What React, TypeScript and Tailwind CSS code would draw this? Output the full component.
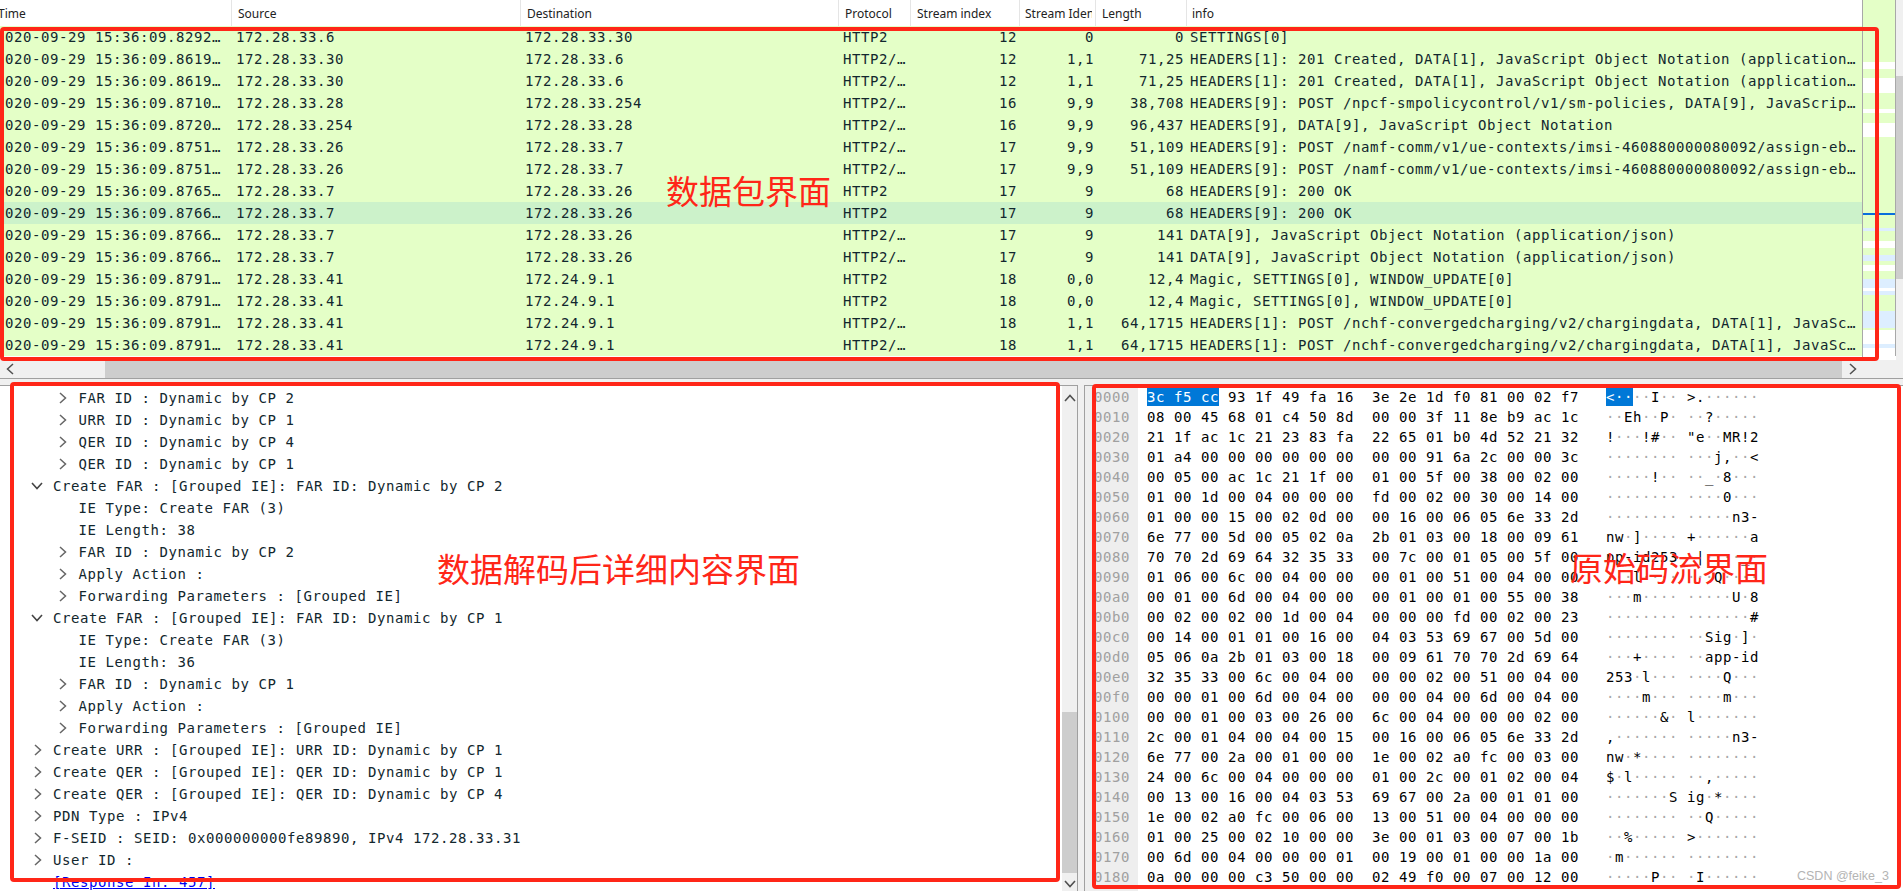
const packets: [string, string, string, string, string, string, string, string][] = [
  ["2020-09-29 15:36:09.8292…", "172.28.33.6", "172.28.33.30", "HTTP2", "12", "0", "0", "SETTINGS[0]"],
  ["2020-09-29 15:36:09.8619…", "172.28.33.30", "172.28.33.6", "HTTP2/…", "12", "1,1", "71,25", "HEADERS[1]: 201 Created, DATA[1], JavaScript Object Notation (application…"],
  ["2020-09-29 15:36:09.8619…", "172.28.33.30", "172.28.33.6", "HTTP2/…", "12", "1,1", "71,25", "HEADERS[1]: 201 Created, DATA[1], JavaScript Object Notation (application…"],
  ["2020-09-29 15:36:09.8710…", "172.28.33.28", "172.28.33.254", "HTTP2/…", "16", "9,9", "38,708", "HEADERS[9]: POST /npcf-smpolicycontrol/v1/sm-policies, DATA[9], JavaScrip…"],
  ["2020-09-29 15:36:09.8720…", "172.28.33.254", "172.28.33.28", "HTTP2/…", "16", "9,9", "96,437", "HEADERS[9], DATA[9], JavaScript Object Notation"],
  ["2020-09-29 15:36:09.8751…", "172.28.33.26", "172.28.33.7", "HTTP2/…", "17", "9,9", "51,109", "HEADERS[9]: POST /namf-comm/v1/ue-contexts/imsi-460880000080092/assign-eb…"],
  ["2020-09-29 15:36:09.8751…", "172.28.33.26", "172.28.33.7", "HTTP2/…", "17", "9,9", "51,109", "HEADERS[9]: POST /namf-comm/v1/ue-contexts/imsi-460880000080092/assign-eb…"],
  ["2020-09-29 15:36:09.8765…", "172.28.33.7", "172.28.33.26", "HTTP2", "17", "9", "68", "HEADERS[9]: 200 OK"],
  ["2020-09-29 15:36:09.8766…", "172.28.33.7", "172.28.33.26", "HTTP2", "17", "9", "68", "HEADERS[9]: 200 OK"],
  ["2020-09-29 15:36:09.8766…", "172.28.33.7", "172.28.33.26", "HTTP2/…", "17", "9", "141", "DATA[9], JavaScript Object Notation (application/json)"],
  ["2020-09-29 15:36:09.8766…", "172.28.33.7", "172.28.33.26", "HTTP2/…", "17", "9", "141", "DATA[9], JavaScript Object Notation (application/json)"],
  ["2020-09-29 15:36:09.8791…", "172.28.33.41", "172.24.9.1", "HTTP2", "18", "0,0", "12,4", "Magic, SETTINGS[0], WINDOW_UPDATE[0]"],
  ["2020-09-29 15:36:09.8791…", "172.28.33.41", "172.24.9.1", "HTTP2", "18", "0,0", "12,4", "Magic, SETTINGS[0], WINDOW_UPDATE[0]"],
  ["2020-09-29 15:36:09.8791…", "172.28.33.41", "172.24.9.1", "HTTP2/…", "18", "1,1", "64,1715", "HEADERS[1]: POST /nchf-convergedcharging/v2/chargingdata, DATA[1], JavaSc…"],
  ["2020-09-29 15:36:09.8791…", "172.28.33.41", "172.24.9.1", "HTTP2/…", "18", "1,1", "64,1715", "HEADERS[1]: POST /nchf-convergedcharging/v2/chargingdata, DATA[1], JavaSc…"],
];

const G = "bg-[#e4ffc7]";
const W = "bg-white";
const B = "bg-[#ddeeff]";
const minimap: [number, string][] = [
  [62, G], [7, W], [9, G], [15, W], [16, G], [4, W], [10, G], [14, W], [76, G], [2, "bg-[#0a6edc]"],
  [13, G], [3, B], [10, G], [7, W], [7, G], [6, B], [4, G], [6, W], [8, G], [9, B], [3, W], [4, B],
  [16, G], [17, B], [2, G], [14, W], [4, B], [8, W],
];

type Tree = { level: 1 | 2; arrow?: "right" | "down"; text: string };
const tree: Tree[] = [
  { level: 2, arrow: "right", text: "FAR ID : Dynamic by CP 2" },
  { level: 2, arrow: "right", text: "URR ID : Dynamic by CP 1" },
  { level: 2, arrow: "right", text: "QER ID : Dynamic by CP 4" },
  { level: 2, arrow: "right", text: "QER ID : Dynamic by CP 1" },
  { level: 1, arrow: "down", text: "Create FAR : [Grouped IE]: FAR ID: Dynamic by CP 2" },
  { level: 2, text: "IE Type: Create FAR (3)" },
  { level: 2, text: "IE Length: 38" },
  { level: 2, arrow: "right", text: "FAR ID : Dynamic by CP 2" },
  { level: 2, arrow: "right", text: "Apply Action :" },
  { level: 2, arrow: "right", text: "Forwarding Parameters : [Grouped IE]" },
  { level: 1, arrow: "down", text: "Create FAR : [Grouped IE]: FAR ID: Dynamic by CP 1" },
  { level: 2, text: "IE Type: Create FAR (3)" },
  { level: 2, text: "IE Length: 36" },
  { level: 2, arrow: "right", text: "FAR ID : Dynamic by CP 1" },
  { level: 2, arrow: "right", text: "Apply Action :" },
  { level: 2, arrow: "right", text: "Forwarding Parameters : [Grouped IE]" },
  { level: 1, arrow: "right", text: "Create URR : [Grouped IE]: URR ID: Dynamic by CP 1" },
  { level: 1, arrow: "right", text: "Create QER : [Grouped IE]: QER ID: Dynamic by CP 1" },
  { level: 1, arrow: "right", text: "Create QER : [Grouped IE]: QER ID: Dynamic by CP 4" },
  { level: 1, arrow: "right", text: "PDN Type : IPv4" },
  { level: 1, arrow: "right", text: "F-SEID : SEID: 0x000000000fe89890, IPv4 172.28.33.31" },
  { level: 1, arrow: "right", text: "User ID :" },
];

const hex = [
  "3c f5 cc 93 1f 49 fa 16 3e 2e 1d f0 81 00 02 f7",
  "08 00 45 68 01 c4 50 8d 00 00 3f 11 8e b9 ac 1c",
  "21 1f ac 1c 21 23 83 fa 22 65 01 b0 4d 52 21 32",
  "01 a4 00 00 00 00 00 00 00 00 91 6a 2c 00 00 3c",
  "00 05 00 ac 1c 21 1f 00 01 00 5f 00 38 00 02 00",
  "01 00 1d 00 04 00 00 00 fd 00 02 00 30 00 14 00",
  "01 00 00 15 00 02 0d 00 00 16 00 06 05 6e 33 2d",
  "6e 77 00 5d 00 05 02 0a 2b 01 03 00 18 00 09 61",
  "70 70 2d 69 64 32 35 33 00 7c 00 01 05 00 5f 00",
  "01 06 00 6c 00 04 00 00 00 01 00 51 00 04 00 00",
  "00 01 00 6d 00 04 00 00 00 01 00 01 00 55 00 38",
  "00 02 00 02 00 1d 00 04 00 00 00 fd 00 02 00 23",
  "00 14 00 01 01 00 16 00 04 03 53 69 67 00 5d 00",
  "05 06 0a 2b 01 03 00 18 00 09 61 70 70 2d 69 64",
  "32 35 33 00 6c 00 04 00 00 00 02 00 51 00 04 00",
  "00 00 01 00 6d 00 04 00 00 00 04 00 6d 00 04 00",
  "00 00 01 00 03 00 26 00 6c 00 04 00 00 00 02 00",
  "2c 00 01 04 00 04 00 15 00 16 00 06 05 6e 33 2d",
  "6e 77 00 2a 00 01 00 00 1e 00 02 a0 fc 00 03 00",
  "24 00 6c 00 04 00 00 00 01 00 2c 00 01 02 00 04",
  "00 13 00 16 00 04 03 53 69 67 00 2a 00 01 01 00",
  "1e 00 02 a0 fc 00 06 00 13 00 51 00 04 00 00 00",
  "01 00 25 00 02 10 00 00 3e 00 01 03 00 07 00 1b",
  "00 6d 00 04 00 00 00 01 00 19 00 01 00 00 1a 00",
  "0a 00 00 00 c3 50 00 00 02 49 f0 00 07 00 12 00",
];

function ChevronRight({ className }: { className: string }) {
  return (
    <svg width="8" height="12" viewBox="0 0 8 12" fill="none" className={className}>
      <polyline points="1,1 6.5,6 1,11" stroke="currentColor" strokeWidth="1.5" />
    </svg>
  );
}
function ChevronLeft({ className }: { className: string }) {
  return (
    <svg width="8" height="12" viewBox="0 0 8 12" fill="none" className={className}>
      <polyline points="7,1 1.5,6 7,11" stroke="currentColor" strokeWidth="1.5" />
    </svg>
  );
}
function ChevronDown({ className }: { className: string }) {
  return (
    <svg width="12" height="8" viewBox="0 0 12 8" fill="none" className={className}>
      <polyline points="1,1 6,6.5 11,1" stroke="currentColor" strokeWidth="1.6" />
    </svg>
  );
}
function ChevronUp({ className }: { className: string }) {
  return (
    <svg width="12" height="8" viewBox="0 0 12 8" fill="none" className={className}>
      <polyline points="1,7 6,1.5 11,7" stroke="currentColor" strokeWidth="1.6" />
    </svg>
  );
}

function HexRow({ bytes, index }: { bytes: string; index: number }) {
  const list = bytes.split(" ");
  const first = index === 0;
  return (
    <div className="h-5 leading-5 whitespace-pre text-black pl-[9px]">
      {first ? <span className="bg-[#0078d7] text-white py-px">{list.slice(0, 3).join(" ")}</span> : list.slice(0, 3).join(" ")}
      {" " + list.slice(3, 8).join(" ") + "  " + list.slice(8).join(" ") + "   "}
      {list.map((b, i) => {
        const code = parseInt(b, 16);
        const printable = code >= 32 && code < 127;
        const ch = printable ? String.fromCharCode(code) : "·";
        const selected = first && i < 3;
        return (
          <span key={i}>
            {i === 8 ? " " : ""}
            <span className={selected ? "bg-[#0078d7] text-white py-px" : printable ? "text-black" : "text-[#a8a8a8]"}>{ch}</span>
          </span>
        );
      })}
    </div>
  );
}

export default function App() {
  const mono = "font-['DejaVu_Sans_Mono',monospace] text-[14px] tracking-[0.57px]";
  const head = "h-[26px] leading-[27px] border-r border-[#e5e5e5] whitespace-nowrap shrink-0";
  const red = "absolute border-4 border-[#ff2618] rounded-[4px] pointer-events-none";
  const label = "absolute font-['Noto_Sans_CJK_SC',sans-serif] text-[33px] leading-[40px] text-[#ff2618] whitespace-nowrap";
  return (
    <div className="relative w-[1903px] h-[891px] overflow-hidden bg-[#f0f0f0]">
      {/* packet list */}
      <div className="flex h-[360px] bg-white">
        <div className="w-[1863px] shrink-0 border-r border-[#a8a8a8] overflow-hidden">
          <div className="flex h-[26px] text-[12px] text-[#222] font-['Noto_Sans',sans-serif] bg-white">
            <div className={`${head} w-[232px] overflow-hidden -indent-[2px]`}>Time</div>
            <div className={`${head} w-[289px] pl-[6px]`}>Source</div>
            <div className={`${head} w-[318px] pl-[6px]`}>Destination</div>
            <div className={`${head} w-[72px] pl-[6px]`}>Protocol</div>
            <div className={`${head} w-[109px] pl-[6px]`}>Stream index</div>
            <div className={`${head} w-[76px] pl-[5px] pr-[3px]`}>
              <div className="overflow-hidden">Stream Identifier</div>
            </div>
            <div className={`${head} w-[91px] pl-[6px]`}>Length</div>
            <div className={`${head} flex-1 border-r-0 pl-[5px]`}>info</div>
          </div>
          <div className={`${mono} text-[#12272e]`}>
            {packets.map((p, i) => (
              <div key={i} className={`flex h-[22px] leading-[22px] whitespace-pre ${i === 8 ? "bg-[#ccf2ca]" : G}`}>
                <div className="w-[232px] shrink-0 overflow-hidden"><div className="-ml-[4px]">{p[0]}</div></div>
                <div className="w-[289px] shrink-0 pl-[4px]">{p[1]}</div>
                <div className="w-[318px] shrink-0 pl-[4px]">{p[2]}</div>
                <div className="w-[72px] shrink-0 pl-[4px]">{p[3]}</div>
                <div className="w-[109px] shrink-0 pr-[3px] text-right">{p[4]}</div>
                <div className="w-[76px] shrink-0 pr-[2px] text-right">{p[5]}</div>
                <div className="w-[91px] shrink-0 pr-[3px] text-right">{p[6]}</div>
                <div className="flex-1 pl-[3px]">{p[7]}</div>
              </div>
            ))}
          </div>
        </div>
        <div className="w-[33px] shrink-0 h-[356px] border-r border-[#a8a8a8] overflow-hidden flex flex-col">
          {minimap.map(([h, c], i) => (
            <div key={i} className={`shrink-0 ${c}`} style={{ height: h }} />
          ))}
        </div>
        <div className="flex-1 bg-[#f0f0f0] pt-[76px]">
          <div className="h-[203px] bg-[#cdcdcd]" />
        </div>
      </div>

      {/* horizontal scrollbar */}
      <div className="flex h-[18px] items-center bg-[#f0f0f0]">
        <div className="w-[105px] h-full shrink-0 flex items-center pl-[6px]">
          <ChevronLeft className="text-[#505050]" />
        </div>
        <div className="w-[1737px] h-full shrink-0 bg-[#cdcdcd]" />
        <div className="w-[21px] h-full shrink-0 flex items-center pl-[7px]">
          <ChevronRight className="text-[#505050]" />
        </div>
      </div>

      {/* lower panes */}
      <div className="border-t border-[#a0a0a0] pt-[6px] flex h-[513px]">
        <div className="w-[1078px] shrink-0 border-t border-r border-[#a0a0a0] bg-white flex overflow-hidden">
          <div className={`w-[1062px] shrink-0 pt-[1px] ${mono} text-[#12272e]`}>
            {tree.map((t, i) => (
              <div key={i} className={`relative h-[22px] leading-[22px] whitespace-pre ${t.level === 2 ? "pl-[78.5px]" : "pl-[53px]"}`}>
                {t.arrow === "right" && (
                  <ChevronRight className={`absolute top-[5px] text-[#666] ${t.level === 2 ? "left-[59px]" : "left-[34px]"}`} />
                )}
                {t.arrow === "down" && <ChevronDown className="absolute top-[7px] left-[31px] text-[#444]" />}
                {t.text}
              </div>
            ))}
            <div className="h-[22px] leading-[22px] pl-[53px] text-[#0000ee] underline">[Response In: 457]</div>
          </div>
          <div className="flex-1 bg-[#f0f0f0] flex flex-col items-center">
            <ChevronUp className="mt-[8px] text-[#505050]" />
            <div className="mt-[310px] w-full h-[161px] bg-[#cdcdcd]" />
            <ChevronDown className="mt-[7px] text-[#505050]" />
          </div>
        </div>
        <div className="w-[6px] shrink-0" />
        <div className={`flex-1 border-t border-l border-[#a0a0a0] bg-white flex overflow-hidden ${mono}`}>
          <div className="w-[53px] shrink-0 bg-[#eeeeee] pt-[1px] pl-[9px] text-[#a0a0a0]">
            {hex.map((_, i) => (
              <div key={i} className="h-5 leading-5">{(i * 16).toString(16).padStart(4, "0")}</div>
            ))}
          </div>
          <div className="flex-1 pt-[1px]">
            {hex.map((b, i) => (
              <HexRow key={i} bytes={b} index={i} />
            ))}
          </div>
        </div>
      </div>

      {/* annotations drawn over the screenshot */}
      <div className={`${red} left-0 top-[27px] w-[1879px] h-[334px]`} />
      <div className={`${red} left-[10px] top-[382px] w-[1050px] h-[500px]`} />
      <div className={`${red} left-[1092px] top-[384px] w-[809px] h-[505px]`} />
      <div className={`${label} left-[666px] top-[170px]`}>数据包界面</div>
      <div className={`${label} left-[437px] top-[548px]`}>数据解码后详细内容界面</div>
      <div className={`${label} left-[1570px] top-[547px]`}>原始码流界面</div>
      <div className="absolute left-[1797px] top-[867px] text-[12.5px] leading-[18px] text-[#b4b4b4] font-['Liberation_Sans',sans-serif] whitespace-nowrap">CSDN @feike_3</div>
    </div>
  );
}
